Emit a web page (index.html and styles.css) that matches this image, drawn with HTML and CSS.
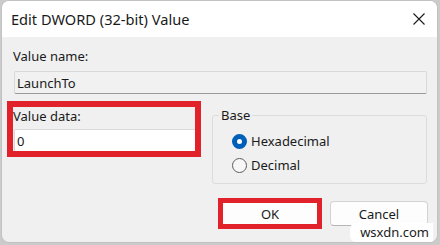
FILE: index.html
```html
<!DOCTYPE html>
<html lang="en">
<head>
  <meta charset="UTF-8">
  <title>Edit DWORD (32-bit) Value</title>
  <link rel="stylesheet" href="styles.css">
</head>
<body>
  <div class="dialog">
    <div class="titlebar">
      <span class="title">Edit DWORD (32-bit) Value</span>
      <span class="close">
        <svg width="12" height="12" viewBox="0 0 12 12"><path d="M0.5 0.5 L11.5 11.5 M11.5 0.5 L0.5 11.5" stroke="#1a1a1a" stroke-width="1.1" fill="none"/></svg>
      </span>
    </div>

    <div class="content">
      <label class="label">Value name:</label>
      <input type="text" class="field field-readonly" value="LaunchTo" readonly>

      <div class="row">
        <div class="data-col mark">
          <label class="label">Value data:</label>
          <input type="text" class="field field-data" value="0">
        </div>

        <fieldset class="base">
          <legend>Base</legend>
          <div class="options">
            <label class="option"><input type="radio" name="base" class="radio" checked> Hexadecimal</label>
            <label class="option"><input type="radio" name="base" class="radio"> Decimal</label>
          </div>
        </fieldset>
      </div>

      <div class="buttons">
        <span class="mark-box"><button class="btn">OK</button></span>
        <button class="btn">Cancel</button>
      </div>
    </div>

    <span class="watermark">wsxdn.com</span>
  </div>
</body>
</html>
```

FILE: styles.css
```css
:root {
  --mark-color: #e2222a;
  --face-color: #f0f0f0;
  --text-color: #1a1a1a;
  --line-color: #d9d9d9;
}

* {
  box-sizing: border-box;
}

body {
  margin: 0;
  padding: 0;
  background: #cbcbcb;
  font-family: "Noto Sans", "Open Sans", Arial, sans-serif;
  color: var(--text-color);
}

.dialog {
  position: relative;
  width: 437px;
  height: 243px;
  margin-left: 1px;
  border: 1px solid #c2c2c2;
  border-radius: 8px;
  background: var(--face-color);
  overflow: hidden;
}

.titlebar {
  display: flex;
  align-items: center;
  height: 36px;
  padding-left: 9px;
  background: #ffffff;
}

.title {
  font-size: 14.6px;
}

.close {
  display: flex;
  margin-left: auto;
  margin-right: 12px;
}

.content {
  padding: 11px 9px 0 11px;
}

.label {
  display: block;
  font-size: 13px;
  line-height: 17px;
}

.field {
  display: block;
  width: 100%;
  height: 23px;
  margin: 6px 0 0 1px;
  padding: 0 2px;
  border: 1px solid var(--line-color);
  border-bottom-color: #9a9a9a;
  border-radius: 2px;
  font-family: inherit;
  font-size: 13px;
  color: var(--text-color);
  outline: none;
}

.field-readonly {
  width: 413px;
  background: #f1f1f1;
}

.row {
  display: flex;
  gap: 17px;
  margin-top: 13px;
}

.data-col {
  width: 182px;
  height: 44px;
  padding-top: 1px;
  overflow: hidden;
}

.field-data {
  width: 184px;
  margin-top: 4px;
  background: #ffffff;
}

.mark {
  outline: 6px solid var(--mark-color);
}

.base {
  width: 215px;
  margin: 0;
  padding: 0;
  border: 1px solid #dcdcdc;
  border-radius: 3px;
}

.base legend {
  margin-left: 6px;
  padding: 0 2px;
  font-size: 13px;
  line-height: 16px;
}

.options {
  padding: 6px 0 6px 19px;
}

.option {
  display: flex;
  align-items: center;
  gap: 4px;
  height: 24px;
  font-size: 13px;
}

.radio {
  appearance: none;
  width: 15px;
  height: 15px;
  margin: 0;
  border: 1px solid #5d5d5d;
  border-radius: 50%;
  background: #f7f7f7;
}

.radio:checked {
  border: 5px solid #005fb8;
  background: #ffffff;
}

.buttons {
  display: flex;
  justify-content: flex-end;
  gap: 11px;
  margin-top: 17px;
}

.btn {
  display: block;
  width: 98px;
  height: 25px;
  border: 1px solid #d2d2d2;
  border-bottom-color: #b5b5b5;
  border-radius: 4px;
  background: #fdfdfd;
  font-family: inherit;
  font-size: 13px;
  color: var(--text-color);
}

.mark-box {
  display: block;
  outline: 5px solid var(--mark-color);
  outline-offset: -2px;
}

.watermark {
  position: absolute;
  right: 4px;
  bottom: 0;
  padding: 0 4px 1px 10px;
  border-radius: 6px 0 0 6px;
  background: #ffffff;
  font-size: 13px;
  color: #222222;
}
```
